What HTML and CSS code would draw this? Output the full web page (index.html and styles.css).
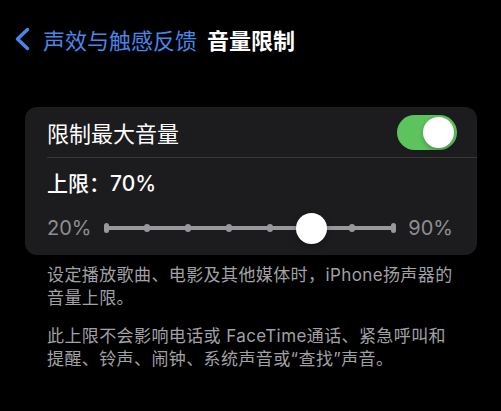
FILE: index.html
```html
<!DOCTYPE html>
<html lang="zh-CN">
<head>
    <meta charset="UTF-8">
    <meta name="viewport" content="width=device-width, initial-scale=1.0">
    <title>音量限制</title>
    <link rel="stylesheet" href="styles.css">
</head>
<body>

<div class="nav">
    <a class="back" href="#">
        <svg class="chevron" width="17" height="24" viewBox="0 0 17 24">
            <polyline points="13.5,2.5 3.5,12 13.5,21.5" fill="none" stroke="#4a86e8" stroke-width="3.5" stroke-linecap="round" stroke-linejoin="round"/>
        </svg>
        <span>声效与触感反馈</span>
    </a>
    <h1>音量限制</h1>
</div>

<div class="card">
    <div class="row">
        <span class="row-title">限制最大音量</span>
        <div class="switch on"><div class="knob"></div></div>
    </div>
    <div class="limit">上限：70%</div>
    <div class="slider">
        <span class="slider-label">20%</span>
        <div class="track">
            <span class="tick end" style="left: 0%"></span>
            <span class="tick" style="left: 14.286%"></span>
            <span class="tick" style="left: 28.571%"></span>
            <span class="tick" style="left: 42.857%"></span>
            <span class="tick" style="left: 57.143%"></span>
            <span class="tick" style="left: 85.714%"></span>
            <span class="tick end" style="left: 100%"></span>
            <span class="thumb" style="left: 71.429%"></span>
        </div>
        <span class="slider-label">90%</span>
    </div>
</div>

<div class="footer">
    <p>设定播放歌曲、电影及其他媒体时，iPhone扬声器的<br>音量上限。</p>
    <p>此上限不会影响电话或 FaceTime通话、紧急呼叫和<br>提醒、铃声、闹钟、系统声音或“查找”声音。</p>
</div>

</body>
</html>
```

FILE: styles.css
```css
body {
    font-family: Inter, "Noto Sans CJK SC", sans-serif;
    background-color: #000;
    color: #fff;
    margin: 0;
}
.nav {
    display: flex;
    align-items: center;
    height: 30px;
    padding: 24px 0 0 14px;
}
.back {
    display: flex;
    align-items: center;
    color: #4a86e8;
    text-decoration: none;
    font-size: 22px;
}
.chevron {
    margin-right: 12px;
}
.nav h1 {
    margin: 0 0 0 10px;
    font-size: 22px;
    font-weight: 700;
}
.card {
    margin: 53px 24px 0 25px;
    background: #1c1c1e;
    border-radius: 12px;
    padding-bottom: 11px;
}
.row {
    display: flex;
    align-items: center;
    justify-content: space-between;
    height: 50px;
    margin-left: 22px;
    padding-right: 20px;
    border-bottom: 1px solid #38383a;
}
.row-title {
    font-size: 22px;
    font-weight: 400;
}
.switch {
    width: 60px;
    height: 35px;
    border-radius: 18px;
    background: #5cc35d;
    position: relative;
}
.knob {
    position: absolute;
    top: 2px;
    right: 3px;
    width: 31px;
    height: 31px;
    border-radius: 50%;
    background: #fff;
    box-shadow: 0 2px 4px rgba(0, 0, 0, 0.25);
}
.limit {
    padding: 13px 22px 0;
    line-height: 26px;
    font-size: 21px;
    font-weight: 500;
}
.slider {
    display: flex;
    align-items: center;
    height: 32px;
    margin-top: 15px;
    padding: 0 24px 0 22px;
}
.slider-label {
    color: #8e8e93;
    font-size: 20px;
}
.track {
    flex: 1;
    position: relative;
    height: 4px;
    margin: 0 15px;
    background: #98989d;
    border-radius: 2px;
}
.tick {
    position: absolute;
    top: -2px;
    width: 6px;
    height: 8px;
    margin-left: -3px;
    border-radius: 3px;
    background: #98989d;
}
.tick.end {
    top: -3px;
    width: 5px;
    height: 10px;
    margin-left: -2.5px;
}
.thumb {
    position: absolute;
    top: -13.5px;
    width: 31px;
    height: 31px;
    margin-left: -15.5px;
    border-radius: 50%;
    background: #fff;
    box-shadow: 0 2px 6px rgba(0, 0, 0, 0.3);
}
.footer {
    padding: 9px 20px 0 47px;
    color: #a1a1a6;
    font-size: 17px;
    letter-spacing: 0.4px;
    line-height: 23px;
}
.footer p {
    margin: 0 0 15px;
    white-space: nowrap;
}
```
